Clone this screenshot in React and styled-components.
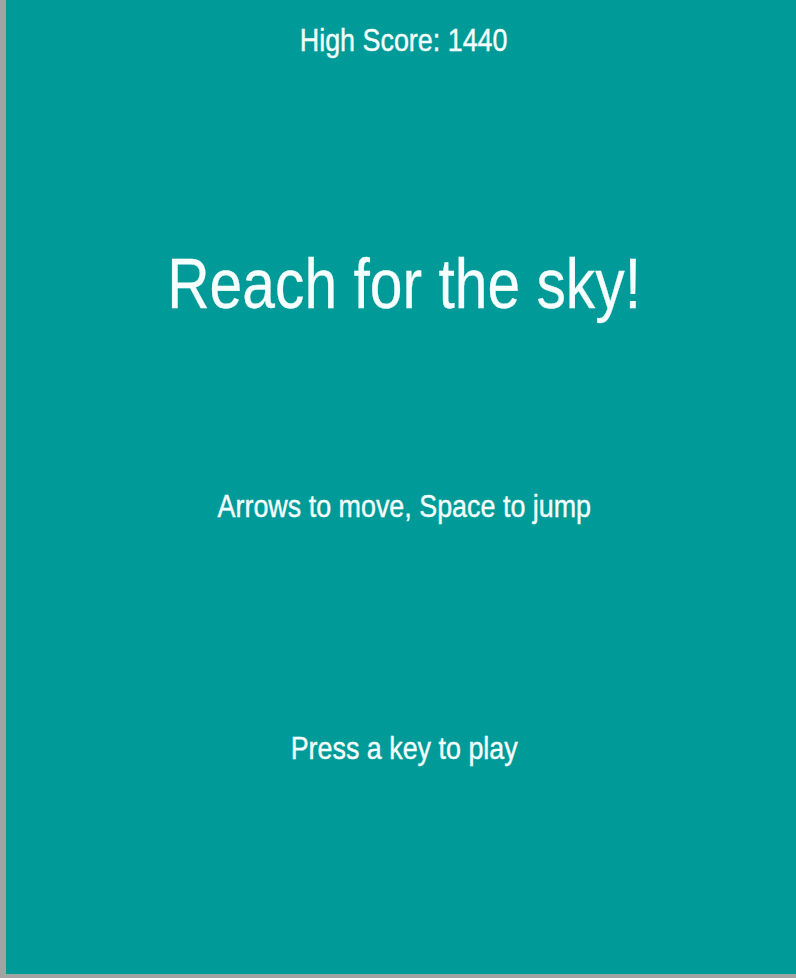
import React from 'react';
import styled, { createGlobalStyle } from 'styled-components';

const GlobalStyle = createGlobalStyle`
  html, body {
    margin: 0;
    padding: 0;
    overflow: hidden;
    background-color: #a3a3a3;
  }
`;

// gray frame shows on the left and bottom edges of the game canvas
const Frame = styled.div`
  display: flex;
  width: 796px;
  height: 978px;
  padding: 0 0 4px 6px;
  box-sizing: border-box;
  background-color: #a3a3a3;
`;

const Screen = styled.div`
  flex: 0 0 796px;
  height: 974px;
  display: flex;
  flex-direction: column;
  align-items: center;
  padding-top: 24px;
  box-sizing: border-box;
  background-color: #009b98;
  color: #f6fffd;
  font-family: "Liberation Sans", Arial, sans-serif;
`;

const Line = styled.div`
  font-size: ${({ size }) => size}px;
  line-height: 1;
  margin-top: ${({ gap }) => gap || 0}px;
  white-space: nowrap;
  transform: scaleX(0.84);
  -webkit-text-stroke: ${({ size }) => (size < 40 ? '0.4px' : '0.3px')} #f6fffd;
`;

const App = () => {
  return (
    <>
      <GlobalStyle />
      <Frame>
        <Screen>
          <Line size={32}>High Score: 1440</Line>
          <Line size={70} gap={193}>Reach for the sky!</Line>
          <Line size={32} gap={171}>Arrows to move, Space to jump</Line>
          <Line size={32} gap={210}>Press a key to play</Line>
        </Screen>
      </Frame>
    </>
  );
};

export default App;
